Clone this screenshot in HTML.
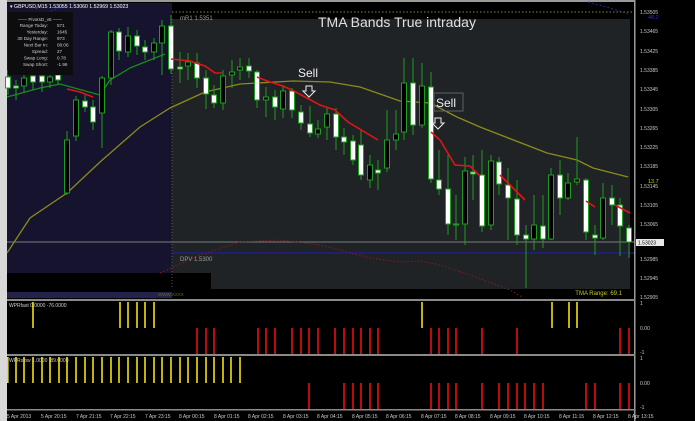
<!DOCTYPE html>
<html><head><meta charset="utf-8"><style>
html,body{margin:0;padding:0;background:#000;width:695px;height:421px;overflow:hidden}
svg{display:block}
text{font-family:"Liberation Sans",sans-serif}
</style></head><body>
<svg width="695" height="421" viewBox="0 0 695 421" xmlns="http://www.w3.org/2000/svg">
<rect x="0" y="0" width="695" height="421" fill="#000"/>
<rect x="0" y="0" width="7" height="421" fill="#d8d8d8"/>
<rect x="7" y="0" width="628" height="2" fill="#9a9a9a"/>
<!-- main backgrounds -->
<rect x="7" y="3" width="165" height="270" fill="#15132e"/>
<rect x="172" y="19" width="458" height="270" fill="#202326"/>
<rect x="7" y="273" width="204" height="17" fill="#000"/>
<rect x="7" y="292" width="165" height="6" fill="#22224a"/>
<line x1="172" y1="12" x2="634" y2="12" stroke="#8a8a1a" stroke-width="1" stroke-dasharray="1.5,2"/>
<line x1="172" y1="19" x2="172" y2="289" stroke="#555" stroke-dasharray="1,2"/>
<!-- horizontal lines -->
<line x1="7" y1="242" x2="634" y2="242" stroke="#7a7d80" stroke-width="1"/>
<line x1="172" y1="253" x2="634" y2="253" stroke="#1c1ca0" stroke-width="1.2"/>
<!-- blue dashed -->
<polyline points="75,2 40,15 8,30" fill="none" stroke="#2424b0" stroke-dasharray="2,2"/>
<polyline points="588,2 610,8 628,14" fill="none" stroke="#2424b0" stroke-dasharray="2,2"/>
<!-- red dotted lower -->
<polyline points="160,273 200,255 240,242 280,240 320,245 340,250 370,258 400,262 420,261 440,265 470,275 510,290 522,297" fill="none" stroke="#8a1a1a" stroke-dasharray="1.5,2"/>
<!-- yellow TMA -->
<polyline points="7,253 30,218 67,193 100,162 140,127 170,108 205,92 240,84 293,81 330,82 360,87 400,101 430,103 457,117 480,127 547,153 577,160 593,168 628,177" fill="none" stroke="#8c8a1c" stroke-width="1.3"/>
<!-- green MA -->
<polyline points="7,97 40,88 60,84 100,95 110,80 130,68 150,60 165,54" fill="none" stroke="#1a8a1a" stroke-width="1.3"/>
<g stroke="#1e9e1e" stroke-width="1" id="c">
<line x1="8" y1="70" x2="8" y2="95"/><rect x="5.5" y="77" width="5" height="11" fill="#fff"/>
<line x1="16" y1="80" x2="16" y2="100"/><rect x="13.5" y="86" width="5" height="2" fill="#fff"/>
<line x1="24" y1="72" x2="24" y2="92"/><rect x="21.5" y="78" width="5" height="8" fill="#000"/>
<line x1="33" y1="70" x2="33" y2="90"/><rect x="30.5" y="76" width="5" height="6" fill="#fff"/>
<line x1="42" y1="70" x2="42" y2="92"/><rect x="39.5" y="76" width="5" height="6" fill="#fff"/>
<line x1="50" y1="72" x2="50" y2="88"/><rect x="47.5" y="77" width="5" height="5" fill="#000"/>
<line x1="58" y1="68" x2="58" y2="85"/><rect x="55.5" y="75" width="5" height="5" fill="#fff"/>
<line x1="67" y1="131" x2="67" y2="195"/><rect x="64.5" y="140" width="5" height="53" fill="#000"/>
<line x1="76" y1="96" x2="76" y2="141"/><rect x="73.5" y="100" width="5" height="36" fill="#000"/>
<line x1="85" y1="95" x2="85" y2="112"/><rect x="82.5" y="101" width="5" height="6" fill="#fff"/>
<line x1="93" y1="100" x2="93" y2="130"/><rect x="90.5" y="107" width="5" height="15" fill="#fff"/>
<line x1="102" y1="76" x2="102" y2="148"/><rect x="99.5" y="78" width="5" height="35" fill="#000"/>
<line x1="111" y1="30" x2="111" y2="85"/><rect x="108.5" y="32" width="5" height="46" fill="#000"/>
<line x1="119" y1="28" x2="119" y2="60"/><rect x="116.5" y="32" width="5" height="19" fill="#fff"/>
<line x1="128" y1="27" x2="128" y2="57"/><rect x="125.5" y="36" width="5" height="16" fill="#000"/>
<line x1="137" y1="30" x2="137" y2="55"/><rect x="134.5" y="36" width="5" height="10" fill="#fff"/>
<line x1="145" y1="40" x2="145" y2="60"/><rect x="142.5" y="47" width="5" height="5" fill="#fff"/>
<line x1="154" y1="38" x2="154" y2="60"/><rect x="151.5" y="43" width="5" height="9" fill="#000"/>
<line x1="162" y1="20" x2="162" y2="75"/><rect x="159.5" y="26" width="5" height="17" fill="#000"/>
<line x1="171" y1="15" x2="171" y2="74"/><rect x="168.5" y="26" width="5" height="43" fill="#fff"/>
<line x1="180" y1="52" x2="180" y2="83"/><rect x="177.5" y="67" width="5" height="2" fill="#fff"/>
<line x1="188" y1="53" x2="188" y2="80"/><rect x="185.5" y="62" width="5" height="4" fill="#000"/>
<line x1="197" y1="53" x2="197" y2="88"/><rect x="194.5" y="63" width="5" height="15" fill="#fff"/>
<line x1="206" y1="70" x2="206" y2="109"/><rect x="203.5" y="78" width="5" height="16" fill="#fff"/>
<line x1="214" y1="85" x2="214" y2="108"/><rect x="211.5" y="95" width="5" height="8" fill="#fff"/>
<line x1="223" y1="70" x2="223" y2="110"/><rect x="220.5" y="76" width="5" height="27" fill="#000"/>
<line x1="232" y1="60" x2="232" y2="88"/><rect x="229.5" y="72" width="5" height="3" fill="#000"/>
<line x1="240" y1="58" x2="240" y2="80"/><rect x="237.5" y="67" width="5" height="3" fill="#000"/>
<line x1="249" y1="58" x2="249" y2="78"/><rect x="246.5" y="66" width="5" height="5" fill="#fff"/>
<line x1="257" y1="70" x2="257" y2="108"/><rect x="254.5" y="72" width="5" height="28" fill="#fff"/>
<line x1="266" y1="87" x2="266" y2="117"/><rect x="263.5" y="97" width="5" height="3" fill="#000"/>
<line x1="275" y1="90" x2="275" y2="120"/><rect x="272.5" y="97" width="5" height="10" fill="#fff"/>
<line x1="283" y1="85" x2="283" y2="118"/><rect x="280.5" y="91" width="5" height="18" fill="#000"/>
<line x1="292" y1="88" x2="292" y2="118"/><rect x="289.5" y="91" width="5" height="19" fill="#fff"/>
<line x1="301" y1="105" x2="301" y2="130"/><rect x="298.5" y="112" width="5" height="11" fill="#fff"/>
<line x1="310" y1="106" x2="310" y2="137"/><rect x="307.5" y="124" width="5" height="9" fill="#fff"/>
<line x1="318" y1="120" x2="318" y2="138"/><rect x="315.5" y="129" width="5" height="5" fill="#000"/>
<line x1="327" y1="108" x2="327" y2="140"/><rect x="324.5" y="114" width="5" height="13" fill="#000"/>
<line x1="336" y1="108" x2="336" y2="150"/><rect x="333.5" y="114" width="5" height="23" fill="#fff"/>
<line x1="344" y1="128" x2="344" y2="155"/><rect x="341.5" y="137" width="5" height="5" fill="#fff"/>
<line x1="353" y1="135" x2="353" y2="165"/><rect x="350.5" y="141" width="5" height="19" fill="#fff"/>
<line x1="361" y1="130" x2="361" y2="180"/><rect x="358.5" y="145" width="5" height="30" fill="#fff"/>
<line x1="370" y1="155" x2="370" y2="188"/><rect x="367.5" y="165" width="5" height="15" fill="#000"/>
<line x1="378" y1="160" x2="378" y2="190"/><rect x="375.5" y="170" width="5" height="3" fill="#fff"/>
<line x1="387" y1="110" x2="387" y2="172"/><rect x="384.5" y="140" width="5" height="28" fill="#000"/>
<line x1="396" y1="110" x2="396" y2="150"/><rect x="393.5" y="134" width="5" height="6" fill="#000"/>
<line x1="404" y1="58" x2="404" y2="140"/><rect x="401.5" y="83" width="5" height="49" fill="#000"/>
<line x1="413" y1="58" x2="413" y2="135"/><rect x="410.5" y="83" width="5" height="42" fill="#fff"/>
<line x1="422" y1="63" x2="422" y2="128"/><rect x="419.5" y="86" width="5" height="39" fill="#000"/>
<line x1="431" y1="72" x2="431" y2="183"/><rect x="428.5" y="87" width="5" height="92" fill="#fff"/>
<line x1="439" y1="150" x2="439" y2="195"/><rect x="436.5" y="180" width="5" height="9" fill="#fff"/>
<line x1="448" y1="155" x2="448" y2="235"/><rect x="445.5" y="189" width="5" height="35" fill="#fff"/>
<line x1="456" y1="195" x2="456" y2="240"/><rect x="453.5" y="224" width="5" height="1" fill="#fff"/>
<line x1="465" y1="157" x2="465" y2="245"/><rect x="462.5" y="171" width="5" height="53" fill="#000"/>
<line x1="473" y1="155" x2="473" y2="200"/><rect x="470.5" y="172" width="5" height="2" fill="#fff"/>
<line x1="482" y1="150" x2="482" y2="232"/><rect x="479.5" y="175" width="5" height="51" fill="#fff"/>
<line x1="491" y1="155" x2="491" y2="230"/><rect x="488.5" y="161" width="5" height="64" fill="#000"/>
<line x1="499" y1="157" x2="499" y2="195"/><rect x="496.5" y="162" width="5" height="22" fill="#fff"/>
<line x1="508" y1="168" x2="508" y2="240"/><rect x="505.5" y="185" width="5" height="13" fill="#fff"/>
<line x1="517" y1="180" x2="517" y2="245"/><rect x="514.5" y="199" width="5" height="36" fill="#fff"/>
<line x1="526" y1="225" x2="526" y2="288"/><rect x="523.5" y="235" width="5" height="4" fill="#fff"/>
<line x1="534" y1="195" x2="534" y2="250"/><rect x="531.5" y="225" width="5" height="14" fill="#000"/>
<line x1="543" y1="195" x2="543" y2="248"/><rect x="540.5" y="226" width="5" height="13" fill="#fff"/>
<line x1="551" y1="168" x2="551" y2="240"/><rect x="548.5" y="175" width="5" height="64" fill="#000"/>
<line x1="560" y1="160" x2="560" y2="215"/><rect x="557.5" y="175" width="5" height="23" fill="#fff"/>
<line x1="568" y1="173" x2="568" y2="200"/><rect x="565.5" y="183" width="5" height="15" fill="#000"/>
<line x1="577" y1="137" x2="577" y2="185"/><rect x="574.5" y="179" width="5" height="3" fill="#000"/>
<line x1="586" y1="178" x2="586" y2="240"/><rect x="583.5" y="180" width="5" height="52" fill="#fff"/>
<line x1="595" y1="225" x2="595" y2="255"/><rect x="592.5" y="235" width="5" height="3" fill="#fff"/>
<line x1="603" y1="183" x2="603" y2="240"/><rect x="600.5" y="198" width="5" height="40" fill="#000"/>
<line x1="612" y1="185" x2="612" y2="225"/><rect x="609.5" y="198" width="5" height="7" fill="#fff"/>
<line x1="620" y1="198" x2="620" y2="256"/><rect x="617.5" y="205" width="5" height="21" fill="#fff"/>
<line x1="629" y1="225" x2="629" y2="258"/><rect x="626.5" y="228" width="5" height="14" fill="#fff"/>
</g>
<!-- red TMA segments -->
<g fill="none" stroke="#e01414" stroke-width="1.6">
<polyline points="67,89 80,92 93,97"/>
<polyline points="171,59 190,61 205,66 215,73 222,73"/>
<polyline points="257,77 270,82 283,86 292,90 305,97 320,105 335,110 348,122 378,140"/>
<polyline points="431,132 440,140 455,165 470,166 480,176"/>
<polyline points="500,175 510,185 525,200"/>
<polyline points="586,201 595,207"/>
<polyline points="615,205 630,213"/>
</g>
<!-- info box -->
<rect x="8" y="12" width="65" height="63" fill="#0d0d10"/>
<g font-size="4.6" fill="#cfcfcf" text-anchor="end">
<text x="40" y="21" text-anchor="middle">—— PivotsD_v5 ——</text>
<text x="48" y="27">Range  Today:</text><text x="57" y="27" text-anchor="start">571</text>
<text x="48" y="33.5">Yesterday:</text><text x="57" y="33.5" text-anchor="start">1645</text>
<text x="48" y="40">30 Day Range:</text><text x="57" y="40" text-anchor="start">973</text>
<text x="48" y="46.5">Next Bar In:</text><text x="57" y="46.5" text-anchor="start">08:06</text>
<text x="48" y="53">Spread:</text><text x="57" y="53" text-anchor="start">27</text>
<text x="48" y="59.5">Swap  Long:</text><text x="57" y="59.5" text-anchor="start">0.78</text>
<text x="48" y="66">Swap  Short:</text><text x="57" y="66" text-anchor="start">-1.96</text>
</g>
<text x="10" y="8" font-size="5.2" fill="#fff">▾ GBPUSD,M15  1.53055 1.53060 1.52969 1.53023</text>
<text x="180" y="20" font-size="6" fill="#9a9a9a">mR1   1.5351</text>
<text x="180" y="261" font-size="6" fill="#9a9a9a">DPV   1.5300</text>
<text x="318" y="27" font-size="14" fill="#e0e0e0" font-family="DejaVu Sans">TMA Bands True intraday</text>
<text x="298" y="77" font-size="12" fill="#f0f0f0" font-family="DejaVu Sans">Sell</text>
<path d="M306,86 h6 v5 h3 l-6,6 l-6,-6 h3 z" fill="none" stroke="#eee" stroke-width="1"/>
<rect x="434" y="93" width="29" height="18" fill="none" stroke="#5a6068"/>
<text x="436" y="107" font-size="12" fill="#f0f0f0" font-family="DejaVu Sans">Sell</text>
<path d="M435,118 h6 v5 h3 l-6,6 l-6,-6 h3 z" fill="none" stroke="#eee" stroke-width="1"/>
<text x="648" y="19" font-size="5.5" fill="#2a2ad0">48.2</text>
<text x="648" y="183" font-size="5.5" fill="#c8c820">13.7</text>
<text x="622" y="295" font-size="6" fill="#c8c820" text-anchor="end">TMA Range: 69.1</text>
<text x="158" y="296" font-size="4.5" fill="#6a6a20">WWW.XXXX</text>
<!-- right axis -->
<rect x="634" y="0" width="1.5" height="421" fill="#9a9a9a"/>
<g font-size="5" fill="#c8c8c8">
<text x="640" y="14">1.53505</text><text x="640" y="33">1.53465</text><text x="640" y="53">1.53425</text>
<text x="640" y="72">1.53385</text><text x="640" y="91">1.53345</text><text x="640" y="111">1.53305</text>
<text x="640" y="130">1.53265</text><text x="640" y="149">1.53225</text><text x="640" y="168">1.53185</text>
<text x="640" y="188">1.53145</text><text x="640" y="207">1.53105</text><text x="640" y="226">1.53065</text>
<text x="640" y="261">1.52985</text><text x="640" y="280">1.52945</text><text x="640" y="299">1.52905</text>
<text x="640" y="305">1</text><text x="640" y="330">0.00</text><text x="640" y="354">-1</text>
<text x="640" y="360">1</text><text x="640" y="385">0.00</text><text x="640" y="409">-1</text>
</g>
<rect x="636" y="239" width="28" height="7" fill="#e8e8e8"/>
<text x="638" y="244.5" font-size="5" fill="#000">1.53023</text>
<!-- panel separators -->
<rect x="7" y="299" width="628" height="2" fill="#8a8a8a"/>
<rect x="7" y="354" width="628" height="2" fill="#8a8a8a"/>
<rect x="7" y="409" width="628" height="1.5" fill="#8a8a8a"/>
<text x="9" y="307" font-size="5" fill="#cfcfcf">WPRfast 0.0000 -76.0000</text>
<text x="9" y="362" font-size="5" fill="#cfcfcf">WPRslow 1.0000 -89.0000</text>
<g stroke="#f0e010" stroke-width="1.6">
<path d="M33,302V328M120,302V328M128,302V328M137,302V328M145,302V328M154,302V328M422,302V328M552,302V328M569,302V328M577,302V328"/>
<path d="M7.8,357V383M16,357V383M24,357V383M33,357V383M42,357V383M50,357V383M59,357V383M67,357V383M76,357V383M85,357V383M93,357V383M102,357V383M111,357V383M119,357V383M128,357V383M137,357V383M145,357V383M154,357V383M162,357V383M171,357V383M180,357V383M188,357V383M197,357V383M206,357V383M214,357V383M223,357V383M231,357V383M240,357V383"/>
</g>
<g stroke="#e81010" stroke-width="1.6">
<path d="M197,328V354M206,328V354M214,328V354M258,328V354M266,328V354M275,328V354M292,328V354M301,328V354M309,328V354M318,328V354M335,328V354M344,328V354M353,328V354M361,328V354M370,328V354M378,328V354M431,328V354M439,328V354M448,328V354M456,328V354M482,328V354M517,328V354M620,328V354M629,328V354"/>
<path d="M309,383V409M344,383V409M353,383V409M361,383V409M370,383V409M378,383V409M431,383V409M439,383V409M448,383V409M456,383V409M482,383V409M499,383V409M508,383V409M517,383V409M525,383V409M534,383V409M543,383V409M586,383V409M595,383V409M620,383V409M629,383V409"/>
</g>
<!-- time axis -->
<g font-size="5" fill="#c8c8c8">
<text x="7" y="418">5 Apr 2013</text><text x="41" y="418">5 Apr 20:15</text><text x="76" y="418">7 Apr 21:15</text>
<text x="110" y="418">7 Apr 22:15</text><text x="145" y="418">7 Apr 23:15</text><text x="179" y="418">8 Apr 00:15</text>
<text x="214" y="418">8 Apr 01:15</text><text x="248" y="418">8 Apr 02:15</text><text x="283" y="418">8 Apr 03:15</text>
<text x="317" y="418">8 Apr 04:15</text><text x="352" y="418">8 Apr 05:15</text><text x="386" y="418">8 Apr 06:15</text>
<text x="421" y="418">8 Apr 07:15</text><text x="455" y="418">8 Apr 08:15</text><text x="490" y="418">8 Apr 09:15</text>
<text x="524" y="418">8 Apr 10:15</text><text x="559" y="418">8 Apr 11:15</text><text x="593" y="418">8 Apr 12:15</text>
<text x="628" y="418">8 Apr 13:15</text>
</g>
</svg>
</body></html>
